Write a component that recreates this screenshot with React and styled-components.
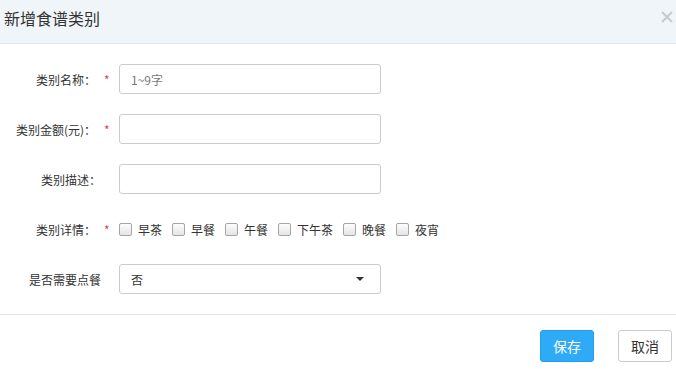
import React from "react";
import styled, { createGlobalStyle } from "styled-components";

const GlobalStyle = createGlobalStyle`
    html, body {
        margin: 0;
        padding: 0;
        background: #fff;
    }
    body {
        font-family: "Microsoft YaHei", "Noto Sans CJK SC", "Liberation Sans", sans-serif;
        color: #333;
    }
`;

const meals = ["早茶", "早餐", "午餐", "下午茶", "晚餐", "夜宵"];

const CloseIcon = () => (
    <svg width="12" height="12" viewBox="0 0 12 12">
        <path d="M1 1 L11 11 M11 1 L1 11" stroke="#c9c9c9" strokeWidth="2" fill="none" />
    </svg>
);

const App = () => {
    return (
        <>
        <GlobalStyle />
        <Dialog>
            <Header>
                <Title>新增食谱类别</Title>
                <CloseButton><CloseIcon /></CloseButton>
            </Header>

            <Body>
                <Row>
                    <LabelCell $required>类别名称：<Star>*</Star></LabelCell>
                    <TextInput type="text" placeholder="1~9字" />
                </Row>
                <Row>
                    <LabelCell $required>类别金额(元)：<Star>*</Star></LabelCell>
                    <TextInput type="text" />
                </Row>
                <Row>
                    <LabelCell>类别描述：</LabelCell>
                    <TextInput type="text" />
                </Row>
                <Row>
                    <LabelCell $required>类别详情：<Star>*</Star></LabelCell>
                    <CheckGroup>
                        {meals.map((m) => (
                            <CheckItem key={m}>
                                <CheckBox />
                                {m}
                            </CheckItem>
                        ))}
                    </CheckGroup>
                </Row>
                <Row>
                    <LabelCell>是否需要点餐</LabelCell>
                    <Select>
                        <span>否</span>
                        <Caret />
                    </Select>
                </Row>
            </Body>

            <Footer>
                <Button $primary>保存</Button>
                <Button>取消</Button>
            </Footer>
        </Dialog>
        </>
    );
};

export default App;

const Dialog = styled.div`
    width: 676px;
    height: 369px;
    display: flex;
    flex-direction: column;
    background: #fff;
`;

const Header = styled.div`
    height: 43px;
    background: #f0f5fa;
    border-bottom: 1px solid #e5e5e5;
    display: flex;
    align-items: center;
    justify-content: space-between;
    padding: 0 3px 0 4px;
`;

const Title = styled.h3`
    margin: 0;
    font-size: 16px;
    font-weight: normal;
    color: #333;
    line-height: 20px;
    margin-top: -8px;
`;

const CloseButton = styled.span`
    display: flex;
    width: 12px;
    height: 12px;
    margin-top: -10px;
`;

const Body = styled.div`
    padding: 20px 0;
    display: flex;
    flex-direction: column;
    gap: 20px;
    border-bottom: 1px solid #e5e5e5;
`;

const Row = styled.div`
    display: flex;
    align-items: center;
    height: 30px;
`;

const LabelCell = styled.label`
    width: 119px;
    box-sizing: border-box;
    display: flex;
    justify-content: flex-end;
    align-items: center;
    padding-right: ${(props) => (props.$required ? "10px" : "18px")};
    font-size: 12px;
    color: #333;
    white-space: nowrap;
`;

const Star = styled.span`
    color: #f03c3c;
    margin-left: 8px;
    font-size: 12px;
    width: 5px;
`;

const TextInput = styled.input`
    width: 262px;
    height: 30px;
    box-sizing: border-box;
    border: 1px solid #ccc;
    border-radius: 3px;
    padding: 0 11px;
    font-size: 12px;
    font-family: inherit;
    color: #333;
    outline: none;

    &::placeholder {
        color: #777;
    }
`;

const CheckGroup = styled.div`
    display: flex;
    align-items: center;
    gap: 10px;
`;

const CheckItem = styled.label`
    display: flex;
    align-items: center;
    gap: 6px;
    font-size: 12px;
    color: #333;
`;

const CheckBox = styled.span`
    display: inline-block;
    width: 13px;
    height: 13px;
    box-sizing: border-box;
    border: 1px solid #a6a6a6;
    border-radius: 2px;
    background: linear-gradient(#fdfdfd, #e4e4e4);
`;

const Select = styled.div`
    width: 262px;
    height: 30px;
    box-sizing: border-box;
    border: 1px solid #ccc;
    border-radius: 3px;
    padding: 0 16px 0 11px;
    display: flex;
    align-items: center;
    justify-content: space-between;
    font-size: 12px;
    color: #333;
`;

const Caret = styled.span`
    width: 0;
    height: 0;
    border-left: 4px solid transparent;
    border-right: 4px solid transparent;
    border-top: 4px solid #333;
`;

const Footer = styled.div`
    display: flex;
    justify-content: flex-end;
    gap: 24px;
    padding: 15px 4px 0 0;
`;

const Button = styled.button`
    width: 54px;
    height: 32px;
    border-radius: 3px;
    font-size: 14px;
    font-family: inherit;
    border: 1px solid ${(props) => (props.$primary ? "#1e9fef" : "#ccc")};
    background: ${(props) => (props.$primary ? "#2eaaf7" : "#fff")};
    color: ${(props) => (props.$primary ? "#fff" : "#333")};
    padding: 0;
`;
